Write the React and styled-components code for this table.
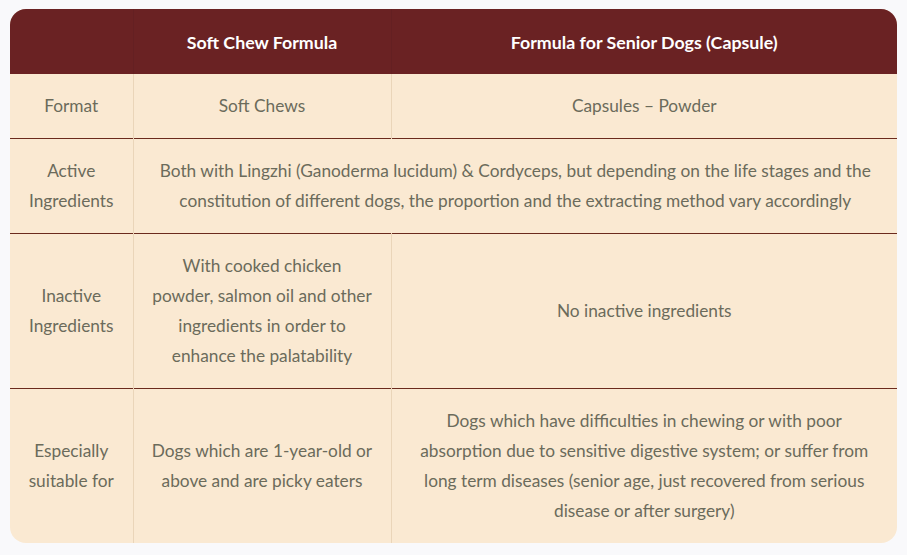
import React from 'react'
import styled, { createGlobalStyle } from 'styled-components'

const Global = createGlobalStyle`
  body {
    margin: 0;
    background: #f9f9fb;
    font-family: Lato, "Open Sans", sans-serif;
  }
`

const Wrap = styled.div`
  padding: 9px 10px 12px 10px;
`

const Box = styled.div`
  border-radius: 16px;
  overflow: hidden;
  background: #fae9d2;
`

const Table = styled.table`
  width: 100%;
  border-collapse: collapse;
  table-layout: fixed;
`

const Head = styled.th`
  background: #6a2223;
  color: #ffffff;
  font-weight: 700;
  font-size: 17.8px;
  line-height: 30px;
  height: 65px;
  padding: 0 16px;
  text-align: center;
  border-left: ${p => (p.$first ? 'none' : '1px solid #642022')};
`

const Row = styled.tr`
  border-top: ${p => (p.$first ? 'none' : '1px solid #6b2a1d')};
`

const Cell = styled.td`
  color: #6b6b5b;
  font-size: 17.3px;
  line-height: 30px;
  text-align: center;
  vertical-align: middle;
  padding: 17px ${p => p.$side || '18px'};
  border-left: ${p => (p.$first ? 'none' : '1px solid #ead5b9')};
`

const App = () => {
  return (
    <Wrap>
      <Global />
      <Box>
        <Table>
          <colgroup>
            <col style={{ width: 123 }} />
            <col style={{ width: 258 }} />
            <col />
          </colgroup>
          <thead>
            <tr>
              <Head $first></Head>
              <Head>Soft Chew Formula</Head>
              <Head>Formula for Senior Dogs (Capsule)</Head>
            </tr>
          </thead>
          <tbody>
            <Row $first>
              <Cell $first>Format</Cell>
              <Cell>Soft Chews</Cell>
              <Cell>Capsules – Powder</Cell>
            </Row>
            <Row>
              <Cell $first>Active Ingredients</Cell>
              <Cell colSpan={2}>
                Both with Lingzhi (Ganoderma lucidum) &amp; Cordyceps, but depending on the life stages and the
                constitution of different dogs, the proportion and the extracting method vary accordingly
              </Cell>
            </Row>
            <Row>
              <Cell $first>Inactive Ingredients</Cell>
              <Cell>With cooked chicken powder, salmon oil and other ingredients in order to enhance the palatability</Cell>
              <Cell>No inactive ingredients</Cell>
            </Row>
            <Row>
              <Cell $first>Especially suitable for</Cell>
              <Cell>Dogs which are 1-year-old or above and are picky eaters</Cell>
              <Cell $side="28px">
                Dogs which have difficulties in chewing or with poor absorption due to sensitive digestive system; or suffer from
                long term diseases (senior age, just recovered from serious disease or after surgery)
              </Cell>
            </Row>
          </tbody>
        </Table>
      </Box>
    </Wrap>
  )
}

export default App
